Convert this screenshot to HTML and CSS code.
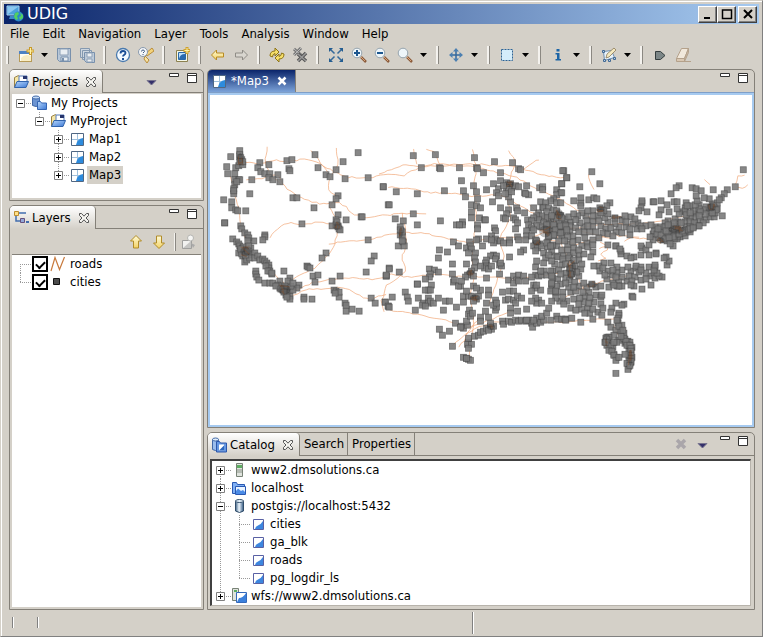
FILE: index.html
```html
<!DOCTYPE html>
<html lang="en">
<head>
<meta charset="utf-8">
<title>UDIG</title>
<link rel="stylesheet" href="styles.css">
</head>
<body>
<svg class="defs" aria-hidden="true">
  <defs>
    <linearGradient id="g-gold" x1="0" y1="0" x2="0" y2="1"><stop offset="0" stop-color="#fffbd8"/><stop offset="1" stop-color="#f3d264"/></linearGradient>
    <linearGradient id="g-blue" x1="0" y1="0" x2="1" y2="1"><stop offset="0" stop-color="#b9d8fb"/><stop offset="1" stop-color="#3b78d6"/></linearGradient>
    <linearGradient id="g-cyl" x1="0" y1="0" x2="1" y2="0"><stop offset="0" stop-color="#3f6486"/><stop offset=".45" stop-color="#f0f8ff"/><stop offset="1" stop-color="#2f5680"/></linearGradient>
  </defs>
  <symbol id="app" viewBox="0 0 18 18"><path d="M1 1h12v9H1z" fill="#4da0dc" stroke="#a9d4f2"/><path d="M2 2h10L2 9z" fill="#8cc8f0"/><path d="M4 11h6l2 3H3z" fill="#3f88c8"/><circle cx="12.500" cy="11.500" r="5" fill="#2a86c8"/><path d="M9 8l3-1 1 2-2 2 1 3-2 1-2-3zM14 8l3 2v3l-3 2-1-3 2-1z" fill="#53d060"/></symbol>
  <symbol id="new" viewBox="0 0 16 16"><rect x="1.500" y="4.500" width="12" height="10" fill="#fffdf2" stroke="#b69a58"/><path d="M1 4h10v3H1z" fill="#4d82c4"/><path d="M3 11q4-5 10-2v5H3z" fill="#f9edc3"/><path d="M12.500 0v8M8.500 4h8" stroke="#c99a28" stroke-width="3"/><path d="M12.500 1v6M9.500 4h6" stroke="#fff2a8"/></symbol>
  <symbol id="save" viewBox="0 0 16 16"><path d="M1.500 1.500h13v13h-11l-2-2z" fill="#b8c7d8" stroke="#7890ac"/><path d="M4 2h8v6H4z" fill="#e9eef2" stroke="#8ea1b7"/><path d="M5 10h7v4H5z" fill="#e9eef2" stroke="#7890ac"/><path d="M6 11h2v3H6z" fill="#7890ac"/></symbol>
  <symbol id="saveall" viewBox="0 0 16 16"><path d="M1.500 1.500h9v9h-9zM3.500 3.500h9v9h-9z" fill="#cdd6df" stroke="#8499b0"/><path d="M5.500 5.500h10v10h-8l-2-2z" fill="#bdcad8" stroke="#7890ac"/><path d="M8 6h5v4H8zM8 12h5v3H8z" fill="#edf0f2" stroke="#8ea1b7"/></symbol>
  <symbol id="help" viewBox="0 0 16 16"><circle cx="8" cy="8" r="6.500" fill="#f4faff" stroke="#4a7aae" stroke-width="1.300"/><path d="M5.500 6.500q0-2.500 2.500-2.500t2.500 2q0 1-1.500 2-1 .7-1 1.500" fill="none" stroke="#1d4f96" stroke-width="1.800"/><path d="M7 11h2v2H7z" fill="#1d4f96"/></symbol>
  <symbol id="tips" viewBox="0 0 16 16"><path d="M14 1l2 3-7 5-2-2z" fill="#f3d27a" stroke="#b98d3c"/><path d="M7 9l4 4-2 3-3-4z" fill="#f7e2a2" stroke="#b98d3c"/><circle cx="5" cy="5" r="4.500" fill="#f4f6f8" stroke="#8899ad"/><path d="M3.500 4.500q0-1.500 1.500-1.500t1.500 1.500L5 6" fill="none" stroke="#405c85"/><path d="M4.500 7h1v1h-1z" fill="#405c85"/></symbol>
  <symbol id="newmap" viewBox="0 0 16 16"><path d="M2.500 3.500h11v11h-11z" fill="#f6f8e8" stroke="#8c8150"/><path d="M4.500 5.500h7v7h-7z" fill="#bfe0fa" stroke="#2868a8"/><path d="M5 12q1-5 6-5v5z" fill="#286aae"/><path d="M13 0v7M9.500 3.500h7" stroke="#cfa22e" stroke-width="3"/><path d="M13 1v5M10.500 3.500h5" stroke="#fff3a8"/></symbol>
  <symbol id="back" viewBox="0 0 16 16"><path d="M1.500 8l5-5v3h7v4h-7v3z" fill="url(#g-gold)" stroke="#b98b22"/></symbol>
  <symbol id="fwd" viewBox="0 0 16 16"><path d="M14.500 8l-5-5v3h-7v4h7v3z" fill="#d9d6cf" stroke="#8f8c86"/></symbol>
  <symbol id="refresh" viewBox="0 0 16 16"><path d="M1 9q0-5 5-5V1l4 4-4 4V6.500Q3.500 7 3.500 10z" fill="#f5df69" stroke="#8e7416"/><path d="M15 7q0 5-5 5v3l-4-4 4-4v2.500q2.500-.5 2.500-3.500z" fill="#f5df69" stroke="#8e7416"/></symbol>
  <symbol id="stop" viewBox="0 0 16 16"><path d="M2 2l8 7M9 1L2 8" stroke="#777" stroke-width="3"/><path d="M2 2l8 7M9 1L2 8" stroke="#bbb"/><path d="M6 7l8 7M14 6l-8 8" stroke="#555" stroke-width="3.500"/><path d="M6 7l8 7M14 6l-8 8" stroke="#999" stroke-width="1.500"/></symbol>
  <symbol id="extent" viewBox="0 0 16 16"><path d="M2 2l4.500 4.500M14 2L9.500 6.500M2 14l4.500-4.500M14 14L9.500 9.500" stroke="#35699a" stroke-width="1.500"/><path d="M1 1h4L1 5zM15 1h-4l4 4zM1 15h4l-4-4zM15 15h-4l4-4z" fill="#245d91"/></symbol>
  <symbol id="zoom" viewBox="0 0 16 16"><path d="M10 10l5 5" stroke="#8c5b3a" stroke-width="2.500"/><path d="M10 10l4 4" stroke="#d6a47c"/><circle cx="6" cy="6" r="4.800" fill="#eef5f9" stroke="#96a4ae"/></symbol>
  <symbol id="zoomin" viewBox="0 0 16 16"><use href="#zoom"/><path d="M6 3v6M3 6h6" stroke="#1c568f" stroke-width="2"/></symbol>
  <symbol id="zoomout" viewBox="0 0 16 16"><use href="#zoom"/><path d="M3 6h6" stroke="#1c568f" stroke-width="2"/></symbol>
  <symbol id="pan" viewBox="0 0 16 16"><path d="M8 3v10M3 8h10" stroke="#34689d" stroke-width="1.500"/><path d="M8 1l3 3.500H5zM8 15l3-3.500H5zM1 8l3.500-3v6zM15 8l-3.500-3v6z" fill="#4b7fb1"/></symbol>
  <symbol id="select" viewBox="0 0 16 16"><path d="M2.500 2.500h11v11h-11z" fill="#d4edfb" stroke="#2d6394" stroke-dasharray="2 1"/></symbol>
  <symbol id="info" viewBox="0 0 16 16"><path d="M6.500 2h3v2.500h-3zM5.500 6h4v6H11v1.500H5.500V12H7V7.500H5.500z" fill="#1b64a6"/></symbol>
  <symbol id="edit" viewBox="0 0 16 16"><path d="M2.500 4.500l8-1 3 7-10 3z" fill="#e8f3fb" stroke="#6c8db0"/><path d="M1.500 3.500h2v2h-2zM2.500 12.500h2v2h-2zM12.500 10.500h2v2h-2zM7.500 12.500h2v2h-2z" fill="#b9d2ea" stroke="#426993"/><path d="M5 11l1-4 7-6 2 2-7 7z" fill="#f4e9bf" stroke="#8a7858" stroke-width=".8"/></symbol>
  <symbol id="commit" viewBox="0 0 16 16"><path d="M3.500 4.500h5l4.500 4-4.500 4h-5z" fill="#7c8687" stroke="#343d3e"/></symbol>
  <symbol id="eraser" viewBox="0 0 16 16"><path d="M6.500 1.500h7l-4 10h-8z" fill="#f1e8db" stroke="#b4a18b"/><path d="M1.500 11.500h8v3h-8z" fill="#d9c7b2" stroke="#b4a18b"/><path d="M9.500 11.500l4-10v4l-4 9zM9 14.500h7" fill="#cdb9a3" stroke="#b4a18b"/></symbol>
  <symbol id="folder" viewBox="0 0 16 16"><path d="M1.500 13V3.500l4-2 2 2h5V13z" fill="#f7e7a5" stroke="#9a8246"/><path d="M6 2h8v6H6z" fill="#fff" stroke="#5278b8"/><path d="M10 2h4v3h-4z" fill="#26346c"/><path d="M1.500 13.500L4 7.500h11.500l-2.500 6z" fill="url(#g-blue)" stroke="#3163ac"/></symbol>
  <symbol id="projects" viewBox="0 0 16 16"><path d="M1.500 2.500v8q3.500 2 7 0v-8z" fill="#6c94d2" stroke="#4169a8"/><ellipse cx="5" cy="2.500" rx="3.500" ry="1.500" fill="#c4dbf6" stroke="#4169a8"/><path d="M6.500 14.500v-8h3l1 1.500h5v6.500z" fill="url(#g-blue)" stroke="#3465b3"/></symbol>
  <symbol id="map" viewBox="0 0 16 16"><path d="M2.500 2.500h12v12h-12z" fill="#fff" stroke="#506783"/><path d="M8.500 3v11M3 8.500h11" stroke="#9fc0dd"/><path d="M7 14q1-6 7-7v7z" fill="#2d8bdd"/></symbol>
  <symbol id="layer" viewBox="0 0 16 16"><path d="M3.500 3.500h10v10h-10z" fill="#fff" stroke="#5961a4"/><path d="M5 13q.5-3 3-3.500Q10.500 9 13 5v8z" fill="#3d86df"/></symbol>
  <symbol id="layers" viewBox="0 0 16 16"><path d="M3 5v6h5M6 3h7" fill="none" stroke="#426dae" stroke-width="1.500"/><path d="M1.500 1.500h4v4h-4z" fill="#ffe18a" stroke="#bd8d2e"/><path d="M7.500 8.500h4v4h-4z" fill="#93a7d8" stroke="#64507d"/><path d="M13 12h3" stroke="#426dae" stroke-width="2"/></symbol>
  <symbol id="catalog" viewBox="0 0 16 16"><path d="M1.500 2.500v10q3 2 6 0v-10z" fill="#9bbdec" stroke="#4169a8"/><ellipse cx="4.500" cy="2.500" rx="3" ry="1.500" fill="#e1edfa" stroke="#4169a8"/><path d="M5.500 15V4.500h3l1 1.500h6v9z" fill="#6698e2" stroke="#2c57aa"/><path d="M8 13.500V7.500h5v6z" fill="#fff"/><path d="M8 13.500l5-5v5z" fill="#2c67bd"/></symbol>
  <symbol id="server" viewBox="0 0 16 16"><path d="M5.500 1.500h6v13h-6z" fill="#dfe3dd" stroke="#788276"/><path d="M6 3h5v3H6z" fill="#5ead62"/><path d="M6 8h5M6 10h5" stroke="#8b9389"/></symbol>
  <symbol id="local" viewBox="0 0 16 16"><path d="M1.500 13.500V2.500h4l1 2h7v9z" fill="#7fb0f4" stroke="#2958b2"/><path d="M4.500 6.500h10v8h-10z" fill="#eaf4ff" stroke="#2958b2"/><path d="M5 14v-3l2-2.500 3 2.500 2-1 2 2v2z" fill="#4b8be6"/></symbol>
  <symbol id="db" viewBox="0 0 16 16"><path d="M4.500 3v10q4 3 8 0V3z" fill="url(#g-cyl)" stroke="#304c69"/><ellipse cx="8.500" cy="3" rx="4" ry="1.500" fill="#e5f2fc" stroke="#304c69"/></symbol>
  <symbol id="wfs" viewBox="0 0 16 16"><path d="M1.500.5h6v12h-6z" fill="#dfe3dd" stroke="#788276"/><path d="M3 2h3v2H3z" fill="#5ead62"/><path d="M5.500 4.500h10v10h-10z" fill="#fff" stroke="#3368ba"/><path d="M6 14l2-4q4 0 7-5v9z" fill="#3b80dc"/></symbol>
  <symbol id="up" viewBox="0 0 16 16"><path d="M8 1.500l5.500 5.500h-3v7h-5V7h-3z" fill="url(#g-gold)" stroke="#b08b28"/></symbol>
  <symbol id="down" viewBox="0 0 16 16"><path d="M8 14.500L2.500 9h3V2h5v7h3z" fill="url(#g-gold)" stroke="#b08b28"/></symbol>
  <symbol id="style" viewBox="0 0 16 16"><path d="M2.500 6.500h9v8h-9z" fill="#c5c5c3" stroke="#a0a09e"/><path d="M3 14l8-7H3z" fill="#f2f2f0"/><circle cx="10.500" cy="4" r="3" fill="#f6f6f4" stroke="#b5b5b2"/><path d="M11 9l4 2-2 3z" fill="#aaa"/></symbol>
  <symbol id="line" viewBox="0 0 16 16"><path d="M1 15L5 1.500l4.500 12L14.500 1" fill="none" stroke="#c87a3d" stroke-width="1.200"/></symbol>
  <symbol id="point" viewBox="0 0 16 16"><path d="M3.500 4.500h6v6h-6z" fill="#4c4c4c" stroke="#111"/></symbol>
  <symbol id="caret" viewBox="0 0 9 5"><path d="M1 0h7L4.500 4z"/></symbol>
  <symbol id="viewmenu" viewBox="0 0 11 6"><path d="M1 .500h9l-4.500 4.500z" fill="#34306a" stroke="#77738e"/></symbol>
  <symbol id="min" viewBox="0 0 10 11"><path d="M.5.500h9v3h-9z" fill="#fff" stroke="#333"/></symbol>
  <symbol id="max" viewBox="0 0 10 11"><path d="M.5.500h9v9h-9zM.5 2.500h9" fill="#fff" stroke="#333"/></symbol>
  <symbol id="x" viewBox="0 0 12 12"><path d="M1.500 1.500h2L6 4.200l2.500-2.700h2v2L8 6l2.500 2.500v2h-2L6 7.800l-2.500 2.700h-2v-2L4 6 1.500 3.500z" fill="#f5f4f0" stroke="#555"/></symbol>
  <symbol id="plus" viewBox="0 0 9 9"><path d="M.5.500h8v8h-8z" fill="#fff" stroke="#808080"/><path d="M2 4.500h5M4.500 2v5" stroke="#000"/></symbol>
  <symbol id="minus" viewBox="0 0 9 9"><path d="M.5.500h8v8h-8z" fill="#fff" stroke="#808080"/><path d="M2 4.500h5" stroke="#000"/></symbol>
</svg>

<div class="window">
  <header class="titlebar">
    <svg class="app-icon"><use href="#app"/></svg>
    <h1>UDIG</h1>
    <div class="caption">
      <button aria-label="Minimize"><svg viewBox="0 0 12 12"><path d="M2 9h6v2H2z"/></svg></button>
      <button aria-label="Maximize"><svg viewBox="0 0 12 12"><path d="M1.500 2h9v8.500h-9zM1 2h10" fill="none" stroke="#000" stroke-width="1.500"/></svg></button>
      <button class="close" aria-label="Close"><svg viewBox="0 0 12 12"><path d="M2 2l8 8M10 2l-8 8" stroke="#000" stroke-width="2"/></svg></button>
    </div>
  </header>
  <nav class="menubar">
    <button>File</button><button>Edit</button><button>Navigation</button><button>Layer</button><button>Tools</button><button>Analysis</button><button>Window</button><button>Help</button>
  </nav>
  <div class="toolbar" role="toolbar">
    <i class="sep"></i>
    <button aria-label="New"><svg><use href="#new"/></svg></button><button class="drop" aria-label="New options"><svg><use href="#caret"/></svg></button>
    <button aria-label="Save"><svg><use href="#save"/></svg></button><button aria-label="Save all"><svg><use href="#saveall"/></svg></button>
    <i class="sep"></i>
    <button aria-label="Help"><svg><use href="#help"/></svg></button><button aria-label="Tips"><svg><use href="#tips"/></svg></button>
    <i class="sep"></i>
    <button aria-label="New map"><svg><use href="#newmap"/></svg></button>
    <i class="sep"></i>
    <button aria-label="Back"><svg><use href="#back"/></svg></button><button aria-label="Forward"><svg><use href="#fwd"/></svg></button>
    <i class="sep"></i>
    <button aria-label="Refresh"><svg><use href="#refresh"/></svg></button><button aria-label="Stop"><svg><use href="#stop"/></svg></button>
    <i class="sep"></i>
    <button aria-label="Zoom to extent"><svg><use href="#extent"/></svg></button><button aria-label="Zoom in"><svg><use href="#zoomin"/></svg></button><button aria-label="Zoom out"><svg><use href="#zoomout"/></svg></button><button aria-label="Zoom"><svg><use href="#zoom"/></svg></button><button class="drop" aria-label="Zoom tools"><svg><use href="#caret"/></svg></button>
    <i class="sep"></i>
    <button aria-label="Pan"><svg><use href="#pan"/></svg></button><button class="drop" aria-label="Pan tools"><svg><use href="#caret"/></svg></button>
    <i class="sep"></i>
    <button aria-label="Select"><svg><use href="#select"/></svg></button><button class="drop" aria-label="Select tools"><svg><use href="#caret"/></svg></button>
    <i class="sep"></i>
    <button aria-label="Info"><svg><use href="#info"/></svg></button><button class="drop" aria-label="Info tools"><svg><use href="#caret"/></svg></button>
    <i class="sep"></i>
    <button aria-label="Edit geometry"><svg><use href="#edit"/></svg></button><button class="drop" aria-label="Edit tools"><svg><use href="#caret"/></svg></button>
    <i class="sep"></i>
    <button aria-label="Commit"><svg><use href="#commit"/></svg></button><button aria-label="Erase"><svg><use href="#eraser"/></svg></button>
  </div>

  <main class="workbench">
    <div class="column">
      <section class="panel">
        <div class="tabs">
          <div class="tab active"><svg class="icon"><use href="#folder"/></svg><span>Projects</span><button class="x" aria-label="Close Projects"><svg><use href="#x"/></svg></button></div>
          <div class="tab-tools"><button class="vm" aria-label="View menu"><svg><use href="#viewmenu"/></svg></button><button aria-label="Minimize"><svg><use href="#min"/></svg></button><button aria-label="Maximize"><svg><use href="#max"/></svg></button></div>
        </div>
        <div class="well projects">
          <div class="row"><button class="cell h" aria-label="Collapse"><svg><use href="#minus"/></svg></button><svg class="icon"><use href="#projects"/></svg><span>My Projects</span></div>
          <div class="row"><i class="cell"></i><button class="cell h vt" aria-label="Collapse"><svg><use href="#minus"/></svg></button><svg class="icon"><use href="#folder"/></svg><span>MyProject</span></div>
          <div class="row"><i class="cell"></i><i class="cell"></i><button class="cell h v" aria-label="Expand"><svg><use href="#plus"/></svg></button><svg class="icon"><use href="#map"/></svg><span>Map1</span></div>
          <div class="row"><i class="cell"></i><i class="cell"></i><button class="cell h v" aria-label="Expand"><svg><use href="#plus"/></svg></button><svg class="icon"><use href="#map"/></svg><span>Map2</span></div>
          <div class="row"><i class="cell"></i><i class="cell"></i><button class="cell h vt" aria-label="Expand"><svg><use href="#plus"/></svg></button><svg class="icon"><use href="#map"/></svg><span class="selected">Map3</span></div>
        </div>
      </section>
      <section class="panel grow">
        <div class="tabs">
          <div class="tab active"><svg class="icon"><use href="#layers"/></svg><span>Layers</span><button class="x" aria-label="Close Layers"><svg><use href="#x"/></svg></button></div>
          <div class="tab-tools"><button aria-label="Minimize"><svg><use href="#min"/></svg></button><button aria-label="Maximize"><svg><use href="#max"/></svg></button></div>
        </div>
        <div class="view-toolbar"><button aria-label="Move up"><svg><use href="#up"/></svg></button><button aria-label="Move down"><svg><use href="#down"/></svg></button><i class="sep"></i><button aria-label="Style"><svg><use href="#style"/></svg></button></div>
        <div class="well layers">
          <label class="row"><i class="cell h vb"></i><input type="checkbox" checked><svg class="icon"><use href="#line"/></svg><span>roads</span></label>
          <label class="row"><i class="cell h vt"></i><input type="checkbox" checked><svg class="icon"><use href="#point"/></svg><span>cities</span></label>
        </div>
      </section>
    </div>
    <div class="column">
      <section class="panel grow editor">
        <div class="tabs">
          <div class="tab editor-tab"><svg class="icon"><use href="#map"/></svg><span>*Map3</span><button class="x" aria-label="Close Map3"><svg viewBox="0 0 12 12"><path d="M2.500 2.500l7 7M9.500 2.500l-7 7" stroke="#fff" stroke-width="2.500"/></svg></button></div>
          <div class="tab-tools"><button aria-label="Minimize"><svg><use href="#min"/></svg></button><button aria-label="Maximize"><svg><use href="#max"/></svg></button></div>
        </div>
        <div class="map-frame"><svg id="map-view" viewBox="210 96 542 329" preserveAspectRatio="xMidYMid slice" role="img" aria-label="Roads and cities of the United States"></svg></div>
      </section>
      <section class="panel">
        <div class="tabs">
          <div class="tab active"><svg class="icon"><use href="#catalog"/></svg><span>Catalog</span><button class="x" aria-label="Close Catalog"><svg><use href="#x"/></svg></button></div>
          <button class="tab">Search</button><button class="tab">Properties</button>
          <div class="tab-tools"><button class="remove" aria-label="Remove" disabled><svg viewBox="0 0 12 12"><path d="M2 2l8 8M10 2l-8 8" stroke="#aaa6aa" stroke-width="3.500"/></svg></button><button class="vm" aria-label="View menu"><svg><use href="#viewmenu"/></svg></button><button aria-label="Minimize"><svg><use href="#min"/></svg></button><button aria-label="Maximize"><svg><use href="#max"/></svg></button></div>
        </div>
        <div class="well sunken">
          <div class="row"><button class="cell h vb" aria-label="Expand"><svg><use href="#plus"/></svg></button><svg class="icon"><use href="#server"/></svg><span>www2.dmsolutions.ca</span></div>
          <div class="row"><button class="cell h v" aria-label="Expand"><svg><use href="#plus"/></svg></button><svg class="icon"><use href="#local"/></svg><span>localhost</span></div>
          <div class="row"><button class="cell h v" aria-label="Collapse"><svg><use href="#minus"/></svg></button><svg class="icon"><use href="#db"/></svg><span>postgis://localhost:5432</span></div>
          <div class="row"><i class="cell v"></i><i class="cell h v"></i><svg class="icon"><use href="#layer"/></svg><span>cities</span></div>
          <div class="row"><i class="cell v"></i><i class="cell h v"></i><svg class="icon"><use href="#layer"/></svg><span>ga_blk</span></div>
          <div class="row"><i class="cell v"></i><i class="cell h v"></i><svg class="icon"><use href="#layer"/></svg><span>roads</span></div>
          <div class="row"><i class="cell v"></i><i class="cell h vt"></i><svg class="icon"><use href="#layer"/></svg><span>pg_logdir_ls</span></div>
          <div class="row"><button class="cell h vt" aria-label="Expand"><svg><use href="#plus"/></svg></button><svg class="icon"><use href="#wfs"/></svg><span>wfs://www2.dmsolutions.ca</span></div>
        </div>
      </section>
    </div>
  </main>
  <footer class="statusbar"><i></i><i></i><i class="split"></i></footer>
</div>
<script src="map.js"></script>
</body>
</html>
```
FILE: styles.css
```css
* { box-sizing: border-box; }
body {
  margin: 0;
  background: #d4d0c8;
  color: #000;
  font: 13px/18px "DejaVu Sans Condensed", "DejaVu Sans", sans-serif;
}
button { font: inherit; color: inherit; background: none; border: 0; padding: 0; margin: 0; }
svg { display: block; flex: none; }
.defs { position: absolute; width: 0; height: 0; }
.icon { width: 16px; height: 16px; }

.window {
  display: flex;
  flex-direction: column;
  min-height: 100vh;
  padding: 3px 2px 1px;
  border: 1px solid #d4d0c8;
  border-right-color: #808080;
  border-bottom-color: #808080;
  box-shadow: inset 1px 1px 0 #fff;
}
.titlebar {
  display: flex;
  align-items: center;
  gap: 3px;
  height: 20px;
  margin: 0 1px;
  padding: 0 2px;
  background: linear-gradient(to right, #0a246a, #a6caf0);
}
.app-icon { width: 18px; height: 18px; }
h1 { flex: 1; margin: 0; color: #fff; font-size: 16px; line-height: 20px; font-weight: normal; font-family: "DejaVu Sans", sans-serif; }
.caption { display: flex; }
.caption button {
  display: grid;
  place-items: center;
  width: 19px;
  height: 17px;
  background: #d4d0c8;
  border: 1px solid;
  border-color: #fff #404040 #404040 #fff;
  box-shadow: inset -1px -1px 0 #808080;
}
.caption svg { width: 12px; height: 12px; }
.caption .close { margin-left: 2px; }

.menubar { display: flex; gap: 13px; height: 19px; padding-left: 7px; line-height: 19px; }
.toolbar { display: flex; align-items: center; height: 24px; }
.toolbar button { display: grid; place-items: center; width: 23px; height: 22px; }
.toolbar svg { width: 16px; height: 16px; }
.toolbar .drop { width: 15px; }
.toolbar .drop svg { width: 9px; height: 5px; }
.sep { flex: none; width: 3px; height: 18px; margin: 0 5px; background: #f4f2ee; border-right: 1px solid #8b8882; }
.toolbar .sep:first-child { margin-left: 3px; }

.workbench { flex: 1; display: grid; grid-template-columns: 195px minmax(0, 1fr); gap: 3px; padding: 2px 5px 0 6px; }
.column { display: flex; flex-direction: column; gap: 4px; min-width: 0; }
.panel { display: flex; flex-direction: column; border: 1px solid #848078; border-radius: 5px 5px 0 0; }
.grow { flex: 1; }
.tabs { display: flex; height: 23px; border-bottom: 1px solid #848078; }
.tab { display: flex; align-items: center; height: 22px; padding: 0 3px 0 4px; border-right: 1px solid #848078; }
.tab.active { height: 23px; gap: 3px; padding: 0 5px 0 3px; border-radius: 4px 4px 0 0; background: linear-gradient(#fff, #d4d0c8); }
.tab .x { margin-left: 4px; }
.tab .x svg { width: 12px; height: 12px; }
.tab.editor-tab { gap: 4px; padding: 0 7px 0 3px; color: #fff; background: linear-gradient(#0a246a, #7ba2d8); border-radius: 4px 0 0 0; }
.tab.editor-tab .x { margin-left: 3px; }
.tab-tools { display: flex; gap: 8px; margin-left: auto; padding: 3px 6px 0 0; }
.tab-tools button { height: 11px; }
.tab-tools svg { width: 10px; height: 11px; }
.tab-tools .vm { margin: 4px 4px 0 2px; }
.tab-tools .vm svg { width: 11px; height: 6px; }
.tab-tools .remove { margin-top: 2px; }
.tab-tools .remove svg { width: 12px; height: 12px; }
.view-toolbar { display: flex; align-items: center; justify-content: flex-end; height: 25px; padding-right: 3px; }
.view-toolbar button { width: 23px; padding: 0 3px; }
.view-toolbar svg { width: 16px; height: 16px; }
.view-toolbar .sep { width: 2px; margin: 0 1px 0 3px; }
.well { flex: 1; margin: 1px 2px 2px; background: #fff; }
.projects { padding-bottom: 14px; }
.layers { margin-top: 0; border-top: 1px solid #848078; }
.sunken { margin: 3px 3px 3px 2px; border: 1px solid; border-width: 2px 1px 1px 2px; border-color: #404040 #b8b4ac #b8b4ac #404040; }

.row { display: flex; align-items: center; height: 18px; white-space: nowrap; }
.row span { margin-left: 2px; padding: 0 2px; }
.selected { background: #d4d0c8; }
.cell {
  --dots: repeating-linear-gradient(to bottom, #999 0 1px, transparent 1px 2px);
  --dashes: repeating-linear-gradient(to right, #999 0 1px, transparent 1px 2px);
  flex: none;
  width: 19px;
  height: 18px;
  padding-left: 4px;
  background-repeat: no-repeat;
}
.cell svg { width: 9px; height: 9px; }
.h { background-image: var(--dashes); background-size: 11px 1px; background-position: 8px 9px; }
.v, .vt, .vb { background-image: var(--dots); background-size: 1px 18px; background-position: 8px 0; }
.h.v { background-image: var(--dashes), var(--dots); background-size: 11px 1px, 1px 18px; background-position: 8px 9px, 8px 0; }
.h.vt { background-image: var(--dashes), var(--dots); background-size: 11px 1px, 1px 9px; background-position: 8px 9px, 8px 0; }
.h.vb { background-image: var(--dashes), var(--dots); background-size: 11px 1px, 1px 9px; background-position: 8px 9px, 8px 9px; }
.layers input {
  appearance: none;
  flex: none;
  width: 16px;
  height: 16px;
  margin: 0 2px 0 1px;
  border: 2px solid #000;
  background: #fff;
}
.layers input:checked::before {
  content: "";
  display: block;
  width: 7px;
  height: 4px;
  margin: 3px 0 0 2px;
  border: solid #000;
  border-width: 0 0 2px 2px;
  transform: rotate(-45deg);
}

.editor .tabs { border-bottom-color: #7f9fc8; }
.map-frame { flex: 1; display: flex; contain: size; border: 2px solid #a6caf0; background: #fff; }
#map-view { flex: 1; min-width: 0; }
.roads { fill: none; stroke: #f0a878; stroke-width: .7; }
.cities rect { fill: #7a7a7a; fill-opacity: .9; stroke: #444; stroke-opacity: .6; stroke-width: .8; }
.metro { fill: none; stroke: #8a4a20; stroke-opacity: .4; stroke-width: 1; }
.shade { fill: #1c1c1c; fill-opacity: .3; }

.statusbar { display: flex; align-items: center; height: 25px; padding-left: 9px; }
.statusbar i { width: 2px; height: 11px; margin-right: 23px; border-left: 1px solid #808080; border-right: 1px solid #fff; }
.statusbar .split { height: 22px; margin-left: 410px; }
```
FILE: map.js
```js
const NS = "http://www.w3.org/2000/svg";
const view = document.getElementById("map-view");

// Survey sheets: origin of the sheet, then city centres in thirds of a unit.
const sheets = [
  [210, 140, `91,35 63,51 53,82 80,85 92,52 98,60 95,70 88,78 100,75 90,45 95,55 100,66 92,68 54,103 77,103 75,120 88,122 76,135 72,147 73,162 92,120 74,155 82,128 151,69 145,85
  178,77 154,98 165,102 180,103 205,105 178,115 191,120 212,128 127,121 122,162 231,64 247,62 238,87 240,93 316,47 324,85 380,92 400,67 445,39
  349,107 361,111 406,118 475,115 519,142 385,169 378,178 367,195 313,204 251,175 262,175 42,181 66,186 66,206 79,211 84,213 110,214 45,249
  46,251 94,260 97,267 107,280 115,286 70,298 83,306 87,312 132,305 117,295 115,305 165,286 165,293 160,302 277,252 385,227 380,240 409,240
  453,232 456,231 368,260 378,255 384,262 388,268 391,272 385,258 383,248 535,196 476,301 493,349 485,364 349,339 336,355 291,380 294,381 301,385
  223,395 241,415 309,410 325,405 316,426 391,408 368,424 470,398 528,410 537,386 484,475 496,489 525,487 534,500 449,514 409,514 427,507
  407,490 408,497 388,472 372,451 378,455 388,456 375,460 283,472 283,478 307,477 268,435 262,445 90,320 100,325 95,335 105,340 112,330
  88,340 100,350 110,350 120,340 125,325 125,345 135,340 105,368 112,362 120,355 135,355 145,350 152,362 160,358 165,365 172,370 178,375
  178,385 170,380 180,395 187,403 175,395 188,400 138,395 138,402 142,412 147,422 165,430 180,430 190,430 210,425 205,435 215,440 225,445
  230,450 220,450 235,440 240,450 235,460 240,470 240,478 230,465 250,450 245,440 210,445 200,440 235,425 250,430 108,335 98,342 104,322 118,318 225,440 214,448 95,328 108,345 116,333 222,456 232,472`],
  [380, 140, `101,49 166,47 125,85 178,85 180,87 238,85 283,55 343,67 397,70 415,88 420,90 289,85 291,87 310,101 362,99 244,123 193,154 113,162 49,156
  9,142 28,196 100,223 47,238 69,243 113,257 181,243 339,132 280,138 249,154 290,156 318,152 256,172 292,177 354,147 348,160 355,170 337,187
  390,188 386,172 380,130 385,135 392,132 388,140 395,145 378,145 385,150 405,138 415,142 438,139 376,162 395,158 433,160 445,167 437,162
  362,125 370,138 478,145 488,142 487,150 550,95 559,115 544,132 274,196 288,198 302,205 274,218 275,235 297,235 313,241 316,242 291,255 292,268
  228,256 246,248 246,257 237,255 362,205 384,210 378,222 370,235 377,237 408,205 412,215 433,219 400,235 406,241 411,249 407,269 442,240
  459,205 343,265 345,275 335,290 345,298 350,305 340,310 360,305 320,298 333,300 370,310 388,300 389,310 412,292 415,300 307,319 294,298
  290,300 268,307 220,306 235,319 260,325 270,320 275,328 265,340 285,340 178,331 202,337 176,356 283,355 218,373 260,374 285,368 284,385
  275,395 270,402 262,405 255,412 280,408 218,402 219,427 222,422 241,440 235,438 245,425 148,388 164,392 175,397 150,402 148,412 135,417
  154,436 145,452 135,452 150,450 111,432 112,434 76,458 81,473 85,485 38,471 115,476 131,489 128,495 144,476 144,490 150,485 136,500
  161,490 176,476 195,485 207,483 189,511 230,503 249,486 251,470 265,470 106,512 28,388 58,397 18,409 20,405 62,262 64,275 60,285
  68,288 68,278 62,270 55,318 70,308 73,320 68,303 15,487 25,500 28,503 226,550 178,568 187,586 208,573 217,619 245,560 250,566 240,563
  262,555 258,545 265,608 262,612 275,612 265,625 264,595 250,653 258,655 265,658 272,662 260,655 283,590 295,587 300,578 310,575 320,565
  330,560 335,568 325,572 340,560 330,550 325,533 302,533 302,545 268,510 265,522 272,530 278,520 347,511 350,503 315,515 367,545 370,552
  388,352 340,345 330,350 350,350 345,358 320,360 315,370 320,380 312,385 325,388 335,378 358,375 365,380 362,370 358,402 319,414 302,380
  275,470 285,475 290,478 280,485 295,470 300,450 280,440 290,445 260,455 325,450 325,465 345,480 320,490 340,495 350,490 367,457 375,480
  388,455 385,478 400,455 400,480 412,470 425,475 405,490 390,505 392,520 411,515 440,508 385,420 400,410 415,405 410,420 400,430 415,425
  430,410 435,425 460,435 465,445 455,455 480,450 470,435 530,152 540,160 530,165 520,178 510,185 497,190 530,190 540,190 490,205 505,205
  520,210 530,215 535,225 540,230 530,235 545,235 500,218 515,228 495,235 485,230 470,230 475,240 460,235 455,245 445,255
  490,250 500,255 520,255 500,270 525,270 540,260 555,260 560,270 520,285 540,280 480,262 470,260 455,265 440,275 440,290 435,300
  455,290 460,270 465,300 465,310 470,315 478,312 460,318 473,325 468,305 430,330 420,338 467,333 485,320 500,310 505,290 510,320 385,543
  395,548 405,540 415,545 425,540 435,545 445,540 455,550 457,562 470,550 470,535 480,548 490,540 485,530 500,520 510,540 530,530 532,538
  545,538 557,538 505,505 514,485 475,480 470,490 465,475 455,485 485,490 440,540 460,540 465,382 470,365 465,405 455,412 475,410 485,405
  490,395 500,405 480,395 490,340 495,355 490,370 505,345 510,395 515,410 515,430 510,455 525,455`],
  [560, 150, `8,65 19,85 5,103 93,66 119,103 59,112 5,130 148,160 138,170 40,155 60,160 62,145 85,150 100,145 108,148 60,170 547,60 524,111 499,120
  457,120 484,199 395,115 405,118 420,125 355,110 345,115 330,133 490,133 480,145 475,150 278,157 280,158 245,160 240,175 258,187 235,185
  245,155 302,155 300,180 320,165 340,158 348,157 325,187 350,178 375,160 380,170 445,148 430,145 410,155 405,140 319,347 325,333 315,322
  285,310 287,312 310,325 338,290 328,283 305,383 296,380 290,370 280,360 283,345 272,405 243,418 213,440 216,441 220,408 190,462 183,465 166,460 175,490
  175,495 172,505 60,517 12,507 15,510 33,505 97,508 142,516 155,475 125,435 150,488 185,408 175,410 160,405 210,405 120,410 118,175 125,182
  130,185 122,190 150,533 172,520 185,525 165,540 180,545 190,550 160,555 145,562 135,565 138,575 140,585 150,590 145,600 155,605 160,615
  166,630 175,570 170,578 160,578 190,565 195,575 200,585 208,585 210,595 212,605 210,615 212,625 205,635 208,640 205,650 202,658
  180,560 192,612 175,622 200,640 210,635 207,645 138,568 136,578 166,671 168,512 176,530 188,540 143,285 165,288 167,290 180,313 200,320 220,322
  240,315 245,295 240,290 255,300 265,285 225,350 240,360 240,230 255,230 272,225 295,195 245,238 180,305 210,325 178,298 265,315`]
];

// Densely settled regions: outline, number of cities, closest spacing.
const regions = [
  [[0,200, 60,188, 120,182, 170,205, 215,190, 240,230, 215,262, 130,258, 98,272, 98,322, -15,322, -50,290, -40,220], 115, 14],
  [[-30,322, 68,325, 60,395, 105,405, 128,450, 125,500, 50,488, -10,455, -25,420], 70, 14],
  [[90,352, 150,335, 180,355, 230,345, 285,345, 295,385, 230,395, 185,400, 150,425, 135,380], 38, 14],
  [[258,270, 285,225, 340,205, 380,165, 440,165, 472,160, 470,200, 420,228, 370,265, 300,282], 75, 10],
  [[285,280, 345,242, 400,214, 425,226, 370,258, 305,287], 16, 7],
  [[132,560, 148,555, 160,600, 170,625, 150,605, 135,585], 8, 5],
  [[180,545, 195,555, 218,590, 218,640, 198,650, 206,600, 185,570], 14, 5],
  [[445,165, 470,165, 468,190, 448,200], 6, 6],
  [[-60,150, -20,180, -10,230, -45,230, -80,220], 8, 12]
];

const roads = [
  "M246 163l18 2 12-4 14 1 12-2 15 2 12 8 20 8 20 1 18-4 18 1 14-8 15-3h40l40 2 30 9 25 3",
  "M247 180l15-1 16-3 10 14 12 8 20 7 18-2 8 4 6 7 12 4 20-2 25-2 18 1",
  "M268 148l-2 16 5 12 12 10M309 149l10 11 11 16 M337 148l2 18-8 12-2 12 8 8-8 10 10 14-2 17-7 16-16 14-28 14",
  "M270 238l16-15 14 2 20-2 17 2M230 175l6 20 4 15 2 20 10 22 12 10 20 22 10 7 24-9 30-4 26 2 18-5 20 3 20-3 35 2 50 2 45-5",
  "M330 245l14-3 26-2 30-7 24 1 24 5 22 4 28-4 30-1 30-8 35-4 45-2",
  "M291 296l18-6 35-2 25 12 18-6M387 310l24 4 35 6 20 8 25-8 25-10",
  "M380 174l14-4 8-4 16 1h50l25 5 24 6 12 8 30 14 24 14 20 12 40-2 50-8",
  "M388 188l24 1 16 4 28 1 18 3 26-2 35 20 36 14 40 10",
  "M480 318l-10 12-12 20M452 346l18-15 20-8 34-3 30 3 30-3 30 0 14 12",
  "M413 149l5 18M425 149l11 5 5 14M473 148l3 22-2 20 2 20-1 20-3 20 2 25-4 25 4 20-2 20-3 18",
  "M508 152l7 10-3 12-6 14 5 30-12 20 5 20-6 20-10 30",
  "M519 173l14-10 9-4M588 174l1 10 6 8M703 179l7 8M734 187l4-11 7 0 M734 187l8 3 4-4 4 0",
  "M403 213l4 30-5 15 4 14-20 15-4 14 4 15M600 243l8 6-8 6 6 4-12 4M598 250l8-3 M620 244l12-6 9 0",
  "M530 205l25 28 20 40 14 26M545 240l30 5 35-10 40 5M560 300l30-15 40-10",
  "M612 325l12 18 7 15-1 14M615 340l-5 12 8 10M650 242l34-22 24-14"
];

function draw(parent, name, attrs) {
  const node = document.createElementNS(NS, name);
  for (const key in attrs) node.setAttribute(key, attrs[key]);
  parent.appendChild(node);
  return node;
}

let seed = 29;
function random() {
  seed = (seed * 16807) % 2147483647;
  return seed / 2147483647;
}

function inside(x, y, p) {
  let hit = false;
  for (let i = 0, j = p.length - 2; i < p.length; j = i, i += 2) {
    if ((p[i + 1] > y) !== (p[j + 1] > y) &&
        x < (p[j] - p[i]) * (y - p[i + 1]) / (p[j + 1] - p[i + 1]) + p[i]) hit = !hit;
  }
  return hit;
}

// Adds small bends so that long road segments look surveyed.
function roughen(d) {
  const path = draw(view, "path", { d, visibility: "hidden" });
  const length = path.getTotalLength();
  const out = [];
  let last = null;
  for (let s = 0; s < length; s += 4) {
    const p = path.getPointAtLength(s);
    const jump = !last || Math.hypot(p.x - last.x, p.y - last.y) > 5;
    out.push((jump ? "M" : "L") + (p.x + random() * 1.6 - 0.8).toFixed(1) + " " + (p.y + random() * 1.6 - 0.8).toFixed(1));
    last = p;
  }
  path.remove();
  return out.join("");
}

const roadLayer = draw(view, "g", { class: "roads" });
roads.forEach(d => draw(roadLayer, "path", { d: roughen(d) }));

const cityLayer = draw(view, "g", { class: "cities" });
function city(x, y) {
  draw(cityLayer, "rect", { x: Math.round(x - 3.5) + 0.5, y: Math.round(y - 3.5) + 0.5, width: 6, height: 6 });
}
regions.forEach(([outline, count, spacing]) => {
  const xs = outline.filter((v, i) => i % 2 === 0);
  const ys = outline.filter((v, i) => i % 2 === 1);
  const x0 = Math.min(...xs), x1 = Math.max(...xs), y0 = Math.min(...ys), y1 = Math.max(...ys);
  const placed = [];
  for (let tries = 0; tries < 6000 && placed.length < count; tries++) {
    const x = x0 + random() * (x1 - x0), y = y0 + random() * (y1 - y0);
    if (!inside(x, y, outline) || placed.some(p => Math.hypot(p[0] - x, p[1] - y) < spacing)) continue;
    placed.push([x, y]);
    city(560 + x / 3, 150 + y / 3);
  }
});
sheets.forEach(([ox, oy, text]) => {
  text.trim().split(/\s+/).forEach(pair => {
    const [x, y] = pair.split(",").map(Number);
    city(ox + x / 3, oy + y / 3);
  });
});

// Metropolitan areas: centre and radii. Overlapping cities read darker there.
const metros = [[241,160,3,6],[246,252,5,5],[285,290,6,5],[338,226,3,4],[401,233,2,5],[510,185,4,3],[559,215,4,5],[537,243,4,3],[475,298,5,3],[470,273,4,3],[491,327,4,3],[571,270,5,10],[615,218,7,2],[660,241,4,3],[676,230,8,4],[711,208,4,4],[600,210,4,3],[592,285,5,3],[630,358,2,8],[606,342,1,5],[545,232,6,6]];
const metroLayer = draw(view, "g", { class: "metro" });
metros.forEach(([x, y, rx, ry]) => {
  draw(metroLayer, "ellipse", { class: "shade", cx: x, cy: y, rx, ry, stroke: "none" });
  let d = "";
  for (let i = 0; i < 5; i++) {
    d += `M${(x + (random() - 0.5) * 2 * rx).toFixed(1)} ${(y + (random() - 0.5) * 2 * ry).toFixed(1)}`;
    d += `L${(x + (random() - 0.5) * 2 * rx).toFixed(1)} ${(y + (random() - 0.5) * 2 * ry).toFixed(1)}`;
  }
  draw(metroLayer, "path", { d });
});
```
